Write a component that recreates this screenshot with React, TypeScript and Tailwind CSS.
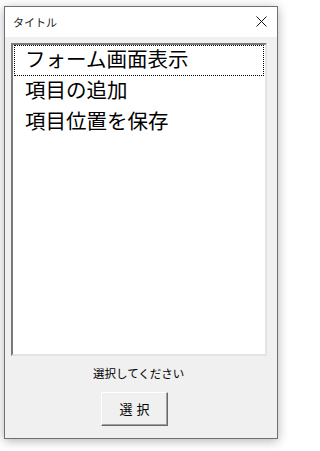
export default function App() {
  const items = ["フォーム画面表示", "項目の追加", "項目位置を保存"];

  return (
    <div
      className="w-[284px] h-[451px] bg-white pt-[6px] pl-[4px]"
      style={{ fontFamily: '"Noto Sans CJK JP", "Noto Sans", sans-serif' }}
    >
      {/* window */}
      <div className="w-[274px] h-[433px] border border-[#707070] bg-[#f0f0f0] shadow-[0_2px_10px_rgba(0,0,0,0.3)] flex flex-col">
        {/* title bar */}
        <div className="h-[30px] bg-white flex items-center justify-between pl-[8px] pr-[10px]">
          <span className="text-[11px] text-[#222]">タイトル</span>
          <svg width="11" height="11" viewBox="0 0 11 11" className="mt-[-1px]">
            <path d="M0.5 0.5 L10.5 10.5 M10.5 0.5 L0.5 10.5" stroke="#111" strokeWidth="1" fill="none" />
          </svg>
        </div>

        <div className="flex flex-col pt-[6px] pl-[6px]">
          {/* list box */}
          <div className="w-[256px] h-[313px] bg-white border-2 border-t-[#7a7a7a] border-l-[#7a7a7a] border-b-[#e3e3e3] border-r-[#e3e3e3] px-[1px]">
            {items.map((item, i) => (
              <div
                key={item}
                className={
                  "h-[31px] flex items-center pl-[10px] pb-[4px] text-[20.5px] text-black leading-none " +
                  (i === 0 ? "border border-dotted border-black" : "border border-transparent")
                }
              >
                {item}
              </div>
            ))}
          </div>

          <div className="h-[36px] flex items-center ml-[82px] text-[11.5px] text-black">
            選択してください
          </div>

          <button className="w-[67px] h-[34px] ml-[90px] bg-[#f0f0f0] border border-t-white border-l-white border-b-[#696969] border-r-[#696969] shadow-[inset_-1px_-1px_0_#a0a0a0] text-[13px] text-black tracking-[4px] pl-[4px]">
            選択
          </button>
        </div>
      </div>
    </div>
  );
}
